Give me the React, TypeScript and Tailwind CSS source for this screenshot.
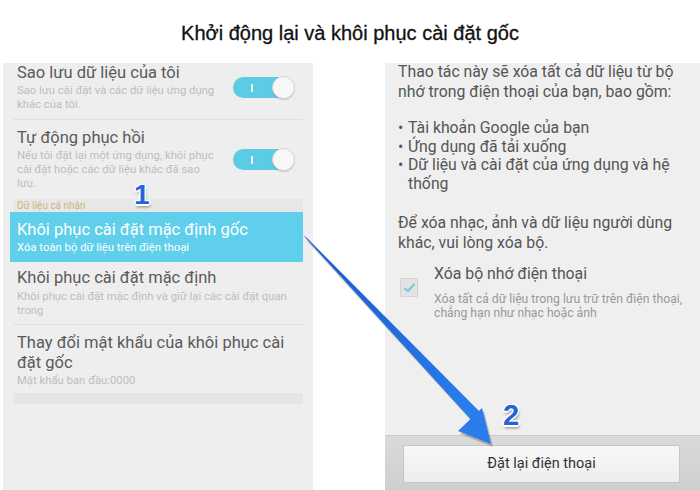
import React from "react";

function Toggle() {
  return (
    <div className="relative w-[62px] h-[21px] shrink-0">
      <div className="absolute left-0 top-0 w-[58px] h-[21px] rounded-full bg-[#5ccbe4]" />
      <div className="absolute left-[18px] top-[7px] w-[2px] h-[8px] bg-white rounded" />
      <div className="absolute right-0 top-[-1px] w-[23px] h-[23px] rounded-full bg-[#f7f7f7] border border-[#d6d6d6] shadow-[0_1px_1px_rgba(0,0,0,0.15)]" />
    </div>
  );
}

export default function App() {
  return (
    <div className="relative w-[700px] h-[490px] bg-white overflow-hidden font-['Roboto',sans-serif]">
      <div className="h-[63px] flex items-start justify-center pt-[20px]">
        <h1 className="font-['Liberation_Sans',Arial,sans-serif] text-[20px] leading-[26px] text-[#111] [-webkit-text-stroke:0.3px_#111]">
          Khởi động lại và khôi phục cài đặt gốc
        </h1>
      </div>

      <div className="flex h-[427px]">
        {/* Left panel */}
        <div className="ml-[3px] w-[310px] bg-[#eeeeee] pl-[7px] pr-[10px] flex flex-col">
          <div className="flex items-center justify-between pl-[7px] pr-[8px] pb-[7px] border-b border-[#e0e0e0] ml-[3px]">
            <div className="-ml-[3px]">
              <div className="text-[16.5px] leading-[20px] text-[#5a5a5a]">Sao lưu dữ liệu của tôi</div>
              <div className="text-[11.3px] leading-[14px] text-[#bdbdbd] mt-[1px]">
                Sao lưu cài đặt và các dữ liệu ứng dụng
                <br />
                khác của tôi.
              </div>
            </div>
            <Toggle />
          </div>

          <div className="flex items-center justify-between pl-[7px] pr-[8px] pt-[8px] pb-[8px]">
            <div>
              <div className="text-[16.5px] leading-[20px] text-[#5a5a5a]">Tự động phục hồi</div>
              <div className="text-[11.3px] leading-[14px] text-[#bdbdbd] mt-[1px]">
                Nếu tôi đặt lại một ứng dụng, khôi phục
                <br />
                cài đặt hoặc các dữ liệu khác đã sao
                <br />
                lưu.
              </div>
            </div>
            <Toggle />
          </div>

          <div className="h-[13px] bg-[#e7e7e7] ml-[3px] pl-[4px] text-[10px] leading-[13px] text-[#c9b77d]">
            Dữ liệu cá nhân
          </div>

          <div className="bg-[#60cfeb] pl-[7px] pt-[8px] pb-[7px]">
            <div className="text-[16.5px] leading-[20px] text-white">Khôi phục cài đặt mặc định gốc</div>
            <div className="text-[11.3px] leading-[14px] text-white mt-[1px]">Xóa toàn bộ dữ liệu trên điện thoại</div>
          </div>

          <div className="pl-[4px] ml-[3px] pt-[6px] pb-[6px] border-b border-[#e0e0e0]">
            <div className="text-[16.5px] leading-[20px] text-[#5a5a5a]">Khôi phục cài đặt mặc định</div>
            <div className="text-[11.3px] leading-[14px] text-[#bdbdbd] mt-[2px]">
              Khôi phục cài đặt mặc định và giữ lại các cài đặt quan
              <br />
              trong
            </div>
          </div>

          <div className="pl-[7px] pt-[8px] pb-[5px]">
            <div className="text-[16.5px] leading-[20px] text-[#5a5a5a]">
              Thay đổi mật khẩu của khôi phục cài
              <br />
              đặt gốc
            </div>
            <div className="text-[11.3px] leading-[14px] text-[#bdbdbd] mt-[1px]">Mật khẩu ban đầu:0000</div>
          </div>

          <div className="h-[11px] ml-[3px] bg-[#e5e5e5]" />
        </div>

        {/* Right panel */}
        <div className="ml-[72px] w-[315px] bg-[#efefef] flex flex-col">
          <div className="pl-[13px] pr-[4px] text-[15.8px] text-[#555]">
            <div className="leading-[20px] -mt-[1px]">
              Thao tác này sẽ xóa tất cả dữ liệu từ bộ
              <br />
              nhớ trong điện thoại của bạn, bao gồm:
            </div>
            <div className="mt-[17px] leading-[18.5px]">
              <div className="flex">
                <span className="w-[10px]">•</span>
                <span>Tài khoản Google của bạn</span>
              </div>
              <div className="flex">
                <span className="w-[10px]">•</span>
                <span>Ứng dụng đã tải xuống</span>
              </div>
              <div className="flex">
                <span className="w-[10px] shrink-0">•</span>
                <span>
                  Dữ liệu và cài đặt của ứng dụng và hệ
                  <br />
                  thống
                </span>
              </div>
            </div>
            <div className="mt-[20px] leading-[20px]">
              Để xóa nhạc, ảnh và dữ liệu người dùng
              <br />
              khác, vui lòng xóa bộ.
            </div>
            <div className="flex mt-[11px]">
              <div className="ml-[2px] mt-[14px] w-[18px] h-[19px] bg-[#e2e2e2] border border-[#d4d4d4] rounded-[1px] flex items-center justify-center shrink-0">
                <svg width="13" height="11" viewBox="0 0 13 11">
                  <path d="M1.5 6 L5 9 L11.5 2" fill="none" stroke="#72c9d6" strokeWidth="2" />
                </svg>
              </div>
              <div className="ml-[16px]">
                <div className="text-[15.8px] leading-[20px] text-[#555]">Xóa bộ nhớ điện thoại</div>
                <div className="text-[12.2px] leading-[14px] text-[#999] mt-[8px] whitespace-nowrap">
                  Xóa tất cả dữ liệu trong lưu trữ trên điện thoại,
                  <br />
                  chẳng hạn như nhạc hoặc ảnh
                </div>
              </div>
            </div>
          </div>

          <div className="mt-auto h-[55px] bg-gradient-to-b from-[#dadada] to-[#cfcfcf] border-t border-[#cacaca] pt-[9px] pl-[18px] pr-[20px]">
            <div className="h-[38px] bg-gradient-to-b from-[#f8f8f8] to-[#ededed] border border-[#c6c6c6] rounded-[2px] flex items-center justify-center text-[14.5px] text-[#333]">
              Đặt lại điện thoại
            </div>
          </div>
        </div>
      </div>

      {/* Arrow overlay */}
      <svg className="absolute left-0 top-0 pointer-events-none" width="700" height="490" viewBox="0 0 700 490">
        <defs>
          <linearGradient id="ag" x1="0" y1="0" x2="1" y2="1">
            <stop offset="0" stopColor="#1a58cf" />
            <stop offset="1" stopColor="#2a80ee" />
          </linearGradient>
        </defs>
        <g opacity="0.28" transform="translate(2,3)">
          <polygon points="303,236 307,239 484,416 475,424" fill="#333" />
          <polygon points="491,444 458,431 482,408" fill="#333" />
        </g>
        <polygon points="303,235 307,238 484,416 475,424" fill="url(#ag)" />
        <polygon points="491,444 458,431 482,408" fill="#2a7cec" />
      </svg>

      <span className="absolute left-[134px] top-[179px] font-['Liberation_Sans',Arial,sans-serif] font-bold text-[28px] leading-[32px] text-[#2563d9] [text-shadow:1.5px_0_0_#fff,-1.5px_0_0_#fff,0_1.5px_0_#fff,0_-1.5px_0_#fff,1px_1px_0_#fff,-1px_-1px_0_#fff,1px_-1px_0_#fff,-1px_1px_0_#fff,1px_3px_3px_rgba(0,0,0,0.45)]">
        1
      </span>
      <span className="absolute left-[503px] top-[399px] font-['Liberation_Sans',Arial,sans-serif] font-bold text-[29px] leading-[32px] text-[#2563d9] [text-shadow:1.5px_0_0_#fff,-1.5px_0_0_#fff,0_1.5px_0_#fff,0_-1.5px_0_#fff,1px_1px_0_#fff,-1px_-1px_0_#fff,1px_-1px_0_#fff,-1px_1px_0_#fff,1px_3px_3px_rgba(0,0,0,0.45)]">
        2
      </span>
    </div>
  );
}
